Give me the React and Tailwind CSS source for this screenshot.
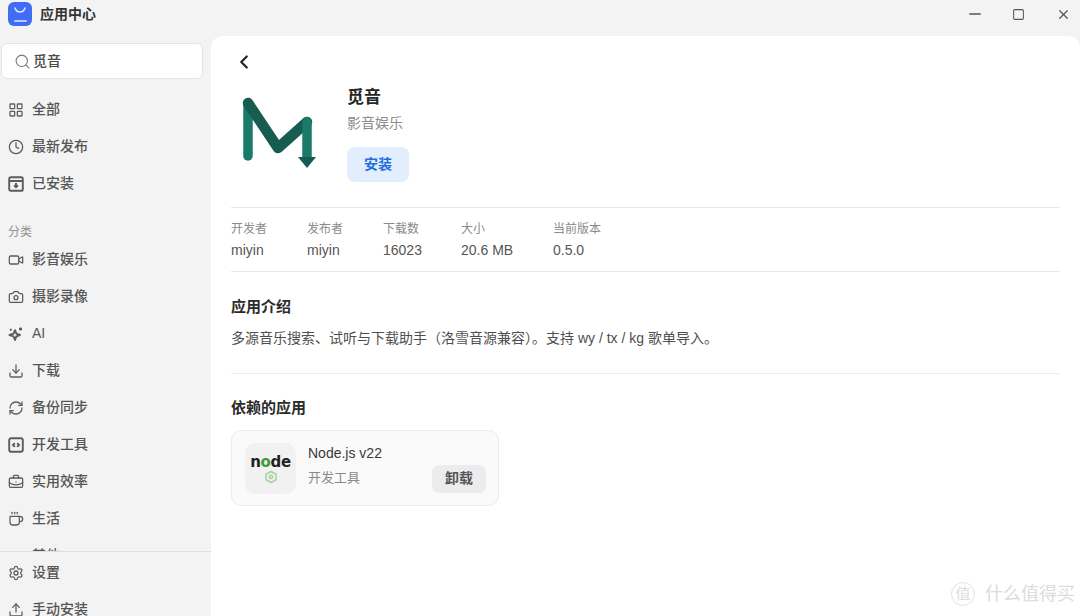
import React from "react";
import { LayoutGrid, Clock, Video, Camera, Download, RefreshCw, BriefcaseBusiness, Coffee, Settings, Upload, Search, ChevronLeft, Minus, Square, X } from "lucide-react";

const F = { fontFamily: '"Liberation Sans", "Noto Sans CJK SC", sans-serif' };

function Installed(props) {
  return (
    <svg viewBox="0 0 16 16" fill="none" stroke="currentColor" strokeWidth="1.5" {...props}>
      <rect x="1.2" y="1.2" width="13.6" height="13.6" rx="1.6" />
      <path d="M1.2 5h13.6M8 7v4.2M6 9.4l2 1.9 2-1.9" />
    </svg>
  );
}
function Code(props) {
  return (
    <svg viewBox="0 0 16 16" fill="none" stroke="currentColor" strokeWidth="1.5" {...props}>
      <rect x="1.2" y="1.2" width="13.6" height="13.6" rx="2" />
      <path d="M6.8 6.2 5 8l1.8 1.8M9.2 6.2 11 8 9.2 9.8" />
    </svg>
  );
}
function Spark(props) {
  return (
    <svg viewBox="0 0 16 16" fill="none" stroke="currentColor" strokeWidth="1.5" strokeLinejoin="round" {...props}>
      <path d="M7 4.2 8.4 7.6 12 9l-3.6 1.4L7 14l-1.4-3.6L1.5 9l4.1-1.4Z" />
      <path d="M12.5 1.5v3M11 3h3M2.8 2.8v2" />
    </svg>
  );
}

function NavItem({ icon: Icon, label, sw = 1.9 }) {
  return (
    <div className="flex h-[37px] shrink-0 items-center gap-[8px] pl-[8px] text-[14px] font-medium text-[#555555]">
      {Icon ? <Icon className="h-[16px] w-[16px] shrink-0 text-[#5c5c5c]" strokeWidth={sw} /> : <div className="h-[16px] w-[16px] shrink-0" />}
      <span>{label}</span>
    </div>
  );
}

function Stat({ label, value, className }) {
  return (
    <div className={className}>
      <div className="text-[12px] leading-[16px] text-[#8a8a8a]">{label}</div>
      <div className="mt-[4px] text-[14px] leading-[18px] text-[#555555]">{value}</div>
    </div>
  );
}

export default function App() {
  return (
    <div style={F} className="relative flex h-[616px] w-[1080px] flex-col overflow-hidden bg-[#f3f3f3]">
      <header className="flex h-[36px] shrink-0 items-start">
        <div className="flex h-[28px] items-center pl-[8px]">
          <div className="flex h-[24px] w-[24px] flex-col items-center justify-between rounded-[6px] bg-[#3f6df6] pb-[4px] pt-[5px]">
            <svg viewBox="0 0 14 6" className="h-[6px] w-[14px]" fill="none" stroke="#dfe8ff" strokeWidth="1.5" strokeLinecap="round"><path d="M2 1c1 3 3 4 5 4s4-1 5-4" /></svg>
            <div className="h-[2px] w-[13px] rounded-full bg-[#b9ccff]" />
          </div>
          <span className="ml-[8px] text-[14px] font-bold text-[#333333]">应用中心</span>
        </div>
        <div className="ml-auto flex items-center pr-[9px] pt-[5px] text-[#555555]">
          <Minus className="h-[18px] w-[18px]" strokeWidth={1.8} />
          <Square className="ml-[28px] h-[13px] w-[13px]" strokeWidth={1.9} />
          <X className="ml-[31px] h-[15px] w-[15px]" strokeWidth={2} />
        </div>
      </header>

      <div className="flex min-h-0 flex-1">
        <aside className="flex w-[211px] shrink-0 flex-col">
          <div className="ml-[1px] mt-[7px] flex h-[36px] w-[202px] shrink-0 items-center rounded-[6px] border border-[#e4e4e4] bg-white pl-[12px] text-[14px] font-medium text-[#4a4a4a]">
            <Search className="h-[17px] w-[17px] text-[#777777]" strokeWidth={1.5} />
            <span className="ml-[2px]">觅音</span>
          </div>
          <div className="mt-[12px] flex shrink-0 flex-col">
            <NavItem icon={LayoutGrid} label="全部" />
            <NavItem icon={Clock} label="最新发布" />
            <NavItem icon={Installed} label="已安装" />
          </div>
          <div className="mt-[20px] h-[19px] shrink-0 pl-[8px] text-[12px] leading-[20px] text-[#929292]">分类</div>
          <div className="flex min-h-0 flex-1 flex-col overflow-hidden">
            <NavItem icon={Video} label="影音娱乐" />
            <NavItem icon={Camera} label="摄影录像" />
            <NavItem icon={Spark} label="AI" />
            <NavItem icon={Download} label="下载" />
            <NavItem icon={RefreshCw} label="备份同步" />
            <NavItem icon={Code} label="开发工具" />
            <NavItem icon={BriefcaseBusiness} label="实用效率" />
            <NavItem icon={Coffee} label="生活" />
            <NavItem label="其他" />
          </div>
          <div className="flex h-[65px] shrink-0 flex-col overflow-hidden border-t border-[#dedede] pt-[2px]">
            <NavItem icon={Settings} label="设置" />
            <NavItem icon={Upload} label="手动安装" />
          </div>
        </aside>

        <main className="min-w-0 flex-1 rounded-t-[12px] bg-white pl-[20px] pr-[20px]">
          <ChevronLeft className="ml-[2px] mt-[15px] h-[22px] w-[22px] text-[#222222]" strokeWidth={2.4} />
          <div className="mt-[10px] flex h-[124px]">
            <div className="flex w-[116px] shrink-0 pl-[9px] pt-[13px]">
              <svg viewBox="0 0 84 84" className="h-[84px] w-[84px]">
                <path d="M8 7v53" stroke="#1a7a68" strokeWidth="9.5" strokeLinecap="round" fill="none" />
                <path d="M8 7 38 52 67 26" stroke="#175c50" strokeWidth="10.5" strokeLinecap="round" strokeLinejoin="round" fill="none" />
                <path d="M67 26v36" stroke="#1a7a68" strokeWidth="9.5" strokeLinecap="round" fill="none" />
                <path d="M58 61h18L67 72Z" fill="#175c50" />
              </svg>
            </div>
            <div className="flex flex-col items-start">
              <div className="mt-[3px] text-[17px] font-bold leading-[24px] text-[#262626]">觅音</div>
              <div className="mt-[3px] text-[14px] leading-[20px] text-[#8c8c8c]">影音娱乐</div>
              <button className="mt-[14px] flex h-[35px] w-[62px] items-center justify-center rounded-[8px] bg-[#e2edfd] text-[14px] font-bold text-[#1f6fe0]">安装</button>
            </div>
          </div>

          <div className="flex h-[65px] items-start border-y border-[#e8e8e8] pt-[13px]">
            <Stat label="开发者" value="miyin" className="w-[76px]" />
            <Stat label="发布者" value="miyin" className="w-[76px]" />
            <Stat label="下载数" value="16023" className="w-[78px]" />
            <Stat label="大小" value="20.6 MB" className="w-[92px]" />
            <Stat label="当前版本" value="0.5.0" className="w-[80px]" />
          </div>

          <div className="h-[102px] border-b border-[#ececec] pt-[24px]">
            <h2 className="text-[15px] font-bold leading-[22px] text-[#2b2b2b]">应用介绍</h2>
            <p className="mt-[10px] text-[14px] leading-[20px] text-[#4f4f4f]">多源音乐搜索、试听与下载助手（洛雪音源兼容）。支持 wy / tx / kg 歌单导入。</p>
          </div>

          <h2 className="mt-[23px] text-[15px] font-bold leading-[22px] text-[#2b2b2b]">依赖的应用</h2>
          <div className="mt-[11px] flex h-[76px] w-[268px] items-center rounded-[10px] border border-[#ececec] bg-[#fafafa] pl-[13px] pr-[12px]">
            <div className="flex h-[51px] w-[51px] shrink-0 flex-col items-center justify-center rounded-[10px] bg-[#f1f1f1] pt-[4px]">
              <div className="text-[15px] font-bold leading-[13px] tracking-[-0.3px] text-[#222222]" style={{ fontFamily: '"DejaVu Sans", sans-serif' }}>n<span className="text-[#3f9a3f]">o</span>de</div>
              <svg viewBox="0 0 14 14" className="mt-[1px] h-[14px] w-[14px]" fill="none" stroke="#a8d4a4" strokeWidth="1.6"><path d="M7 1.5 12 4.3v5.4L7 12.5 2 9.7V4.3Z" /><circle cx="7" cy="7" r="1.6" /></svg>
            </div>
            <div className="ml-[12px] mt-[-7px] flex-1">
              <div className="text-[14px] leading-[20px] text-[#3a3a3a]">Node.js v22</div>
              <div className="mt-[6px] text-[13px] leading-[18px] text-[#8a8a8a]">开发工具</div>
            </div>
            <button className="mt-[21px] flex h-[28px] w-[54px] shrink-0 items-center justify-center rounded-[7px] bg-[#ececec] text-[14px] font-bold text-[#555555]">卸载</button>
          </div>
        </main>
      </div>

      <div className="absolute bottom-[10px] right-[5px] flex items-center text-[#dcdcdc]">
        <div className="flex h-[24px] w-[24px] items-center justify-center rounded-full border border-[#e2e2e2] text-[15px]">值</div>
        <span className="ml-[10px] text-[18px] leading-[24px]">什么值得买</span>
      </div>
    </div>
  );
}
